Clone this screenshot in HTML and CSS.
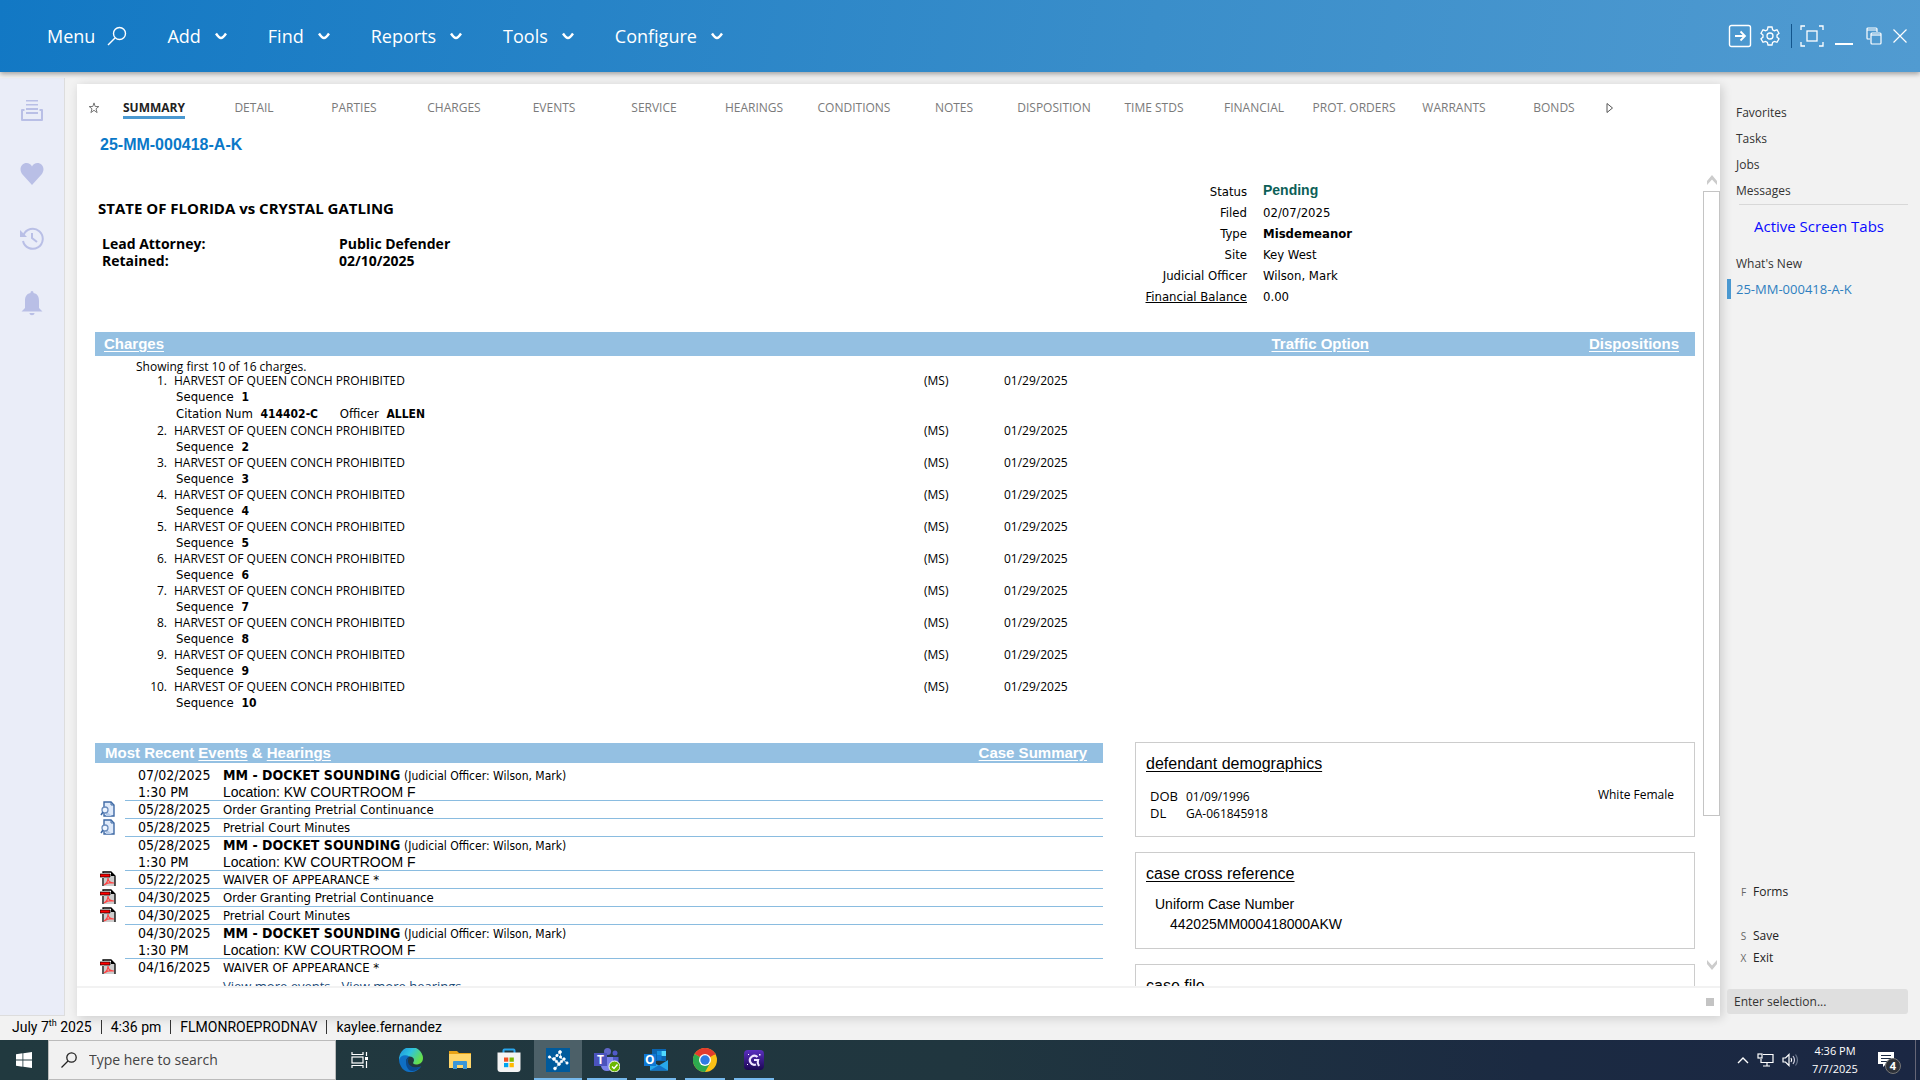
FILE: index.html
```
<!DOCTYPE html>
<html lang="en">
<head>
<meta charset="utf-8">
<title>25-MM-000418-A-K</title>
<link rel="stylesheet" href="styles.css">
</head>
<body>
<svg class="defs" aria-hidden="true">
  <symbol id="chev" viewBox="0 0 14 8"><path d="M2 1.500Q5 6 7 6T12 1.500" fill="none" stroke="#fff" stroke-width="2.400"/></symbol>
  <symbol id="pdf" viewBox="0 0 16 16"><path d="M4 3h8l3 3v9H4z" fill="#ccc"/><path d="M3 2V1h8l4 4v10M3 7v8" fill="none" stroke="#000" stroke-width="1.300"/><path d="M11 1v4h4z" fill="#000"/><path d="M0 3h10v3H0z" fill="#f00" stroke="#000" stroke-width=".7"/><path d="M4 14c3-2 4-4 4-7 0 3 2 5 6 5-4-1-7 0-10 2z" fill="none" stroke="#f44" stroke-width="1.200"/></symbol>
  <symbol id="doc" viewBox="0 0 16 16"><path d="M4 1h7l3 3v11H4z" fill="#dfeafa" stroke="#3f6aa5" stroke-width="1.400"/><path d="M11 1v3h3" fill="none" stroke="#3f6aa5"/><path d="M6 10 12 15H6z" fill="#b8cdea"/><circle cx="5" cy="9" r="3" fill="#eef5ff" stroke="#6b8dbd" stroke-width="1.300"/><path d="M3 11 1 14" stroke="#3f6aa5" stroke-width="1.600"/></symbol>
  <symbol id="arrow" viewBox="0 0 12 12"><path d="M1 11V7L6 1l5 6v4L6 5.500z" fill="#ccc"/></symbol>
</svg>

<header class="topbar">
  <nav class="menu" aria-label="Main">
    <button class="menu-item search">Menu <svg width="20" height="20" viewBox="0 0 20 20" fill="none" stroke="#fff" stroke-width="1.400"><circle cx="12.500" cy="7.500" r="6"/><path d="M8 12 1 19"/></svg></button>
    <button class="menu-item">Add <svg width="14" height="8"><use href="#chev"/></svg></button>
    <button class="menu-item">Find <svg width="14" height="8"><use href="#chev"/></svg></button>
    <button class="menu-item">Reports <svg width="14" height="8"><use href="#chev"/></svg></button>
    <button class="menu-item">Tools <svg width="14" height="8"><use href="#chev"/></svg></button>
    <button class="menu-item">Configure <svg width="14" height="8"><use href="#chev"/></svg></button>
  </nav>
  <div class="window-tools">
    <button aria-label="Sign out"><svg width="24" height="24" viewBox="0 0 24 24" fill="none" stroke="#fff" stroke-width="1.400"><rect x="1.500" y="1.500" width="21" height="21" rx="2"/><path d="M7 12h10M12.500 7.500 17 12l-4.500 4.500" stroke-width="1.800"/></svg></button>
    <button aria-label="Settings"><svg width="20" height="20" viewBox="0 0 20 20" fill="none" stroke="#fff" stroke-width="1.300"><path d="M8 1h4l.6 2.700 1.800 1 2.600-.9 2 3.500-2 1.800v2l2 1.700-2 3.500-2.600-.9-1.800 1L12 19H8l-.6-2.600-1.800-1-2.600.9-2-3.500 2-1.700v-2L1 7.300l2-3.500 2.600.9 1.800-1z"/><circle cx="10" cy="10" r="3"/></svg></button>
    <span class="divider"></span>
    <button aria-label="Full screen"><svg width="24" height="22" viewBox="0 0 24 22" fill="none" stroke="#fff" stroke-width="1.300"><path d="M5 1H1v4M19 1h4v4M5 21H1v-4M19 21h4v-4"/><rect x="7" y="6" width="10" height="10"/></svg></button>
    <button class="minimize" aria-label="Minimize"></button>
    <button class="restore" aria-label="Restore"><svg width="16" height="18" viewBox="0 0 16 18" fill="none" stroke="#fff" stroke-width="1.200"><path d="M4 12H1.500Q1 12 1 11V2q0-1 1-1h8q1 0 1 1v3M1 3h10"/><rect x="5" y="6" width="10" height="11" rx="1"/><path d="M5 8h10"/></svg></button>
    <button aria-label="Close"><svg width="14" height="14" viewBox="0 0 14 14" stroke="#fff" stroke-width="1.200"><path d="m.5.5 13 13M13.500.5l-13 13"/></svg></button>
  </div>
</header>

<div class="workspace">
  <aside class="rail" aria-label="Shortcuts">
    <button aria-label="Documents"><svg width="24" height="24" viewBox="0 0 24 24"><path d="M6 2h12v1.500H6zM6 6h12v1.500H6zM6 10h12v2H6zM6 14h12v2H6z" fill="#b9bfe6"/><path d="M4.500 12H2v10h20V12h-2.500" fill="none" stroke="#b9bfe6" stroke-width="2" stroke-linejoin="round"/></svg></button>
    <button aria-label="Favorites"><svg width="24" height="24" viewBox="0 0 24 24" fill="#b9bfe6"><path d="M12 23 2.500 12.500C-2 6.500 2 1 6.500 1 9 1 11 2.500 12 4.500 13 2.500 15 1 17.500 1 22 1 26 6.500 21.500 12.500z"/></svg></button>
    <button aria-label="History"><svg width="24" height="24" viewBox="0 0 24 24" fill="none" stroke="#b9bfe6" stroke-width="2"><path d="M3.500 9A10 10 0 1 1 3 15"/><path d="M0 4v7h7z" fill="#b9bfe6" stroke="none"/><path d="M12 7v5l5 4"/></svg></button>
    <button aria-label="Notifications"><svg width="24" height="26" viewBox="0 0 24 26" fill="#b9bfe6"><path d="M12 1c1 0 1.500.7 1.500 2C18 4 19 7 19 11v7l3.500 3.500h-21L5 18v-7c0-4 1-7 5.500-8 0-1.300.5-2 1.500-2zM9.500 23h5c0 3-5 3-5 0z"/></svg></button>
  </aside>

  <main class="panel">
    <nav class="tabs" aria-label="Case sections">
      <button class="star" aria-label="Add to favorites"><svg width="12" height="12" viewBox="0 0 12 12" fill="none" stroke="#777"><path d="M6 .9 7.200 4.500h3.700L8 6.800l1.100 3.800L6 8.300l-3.100 2.300L4 6.800 1.100 4.500h3.700z"/></svg></button>
      <a class="tab current" href="#"><span>SUMMARY</span></a>
      <a class="tab" href="#">DETAIL</a>
      <a class="tab" href="#">PARTIES</a>
      <a class="tab" href="#">CHARGES</a>
      <a class="tab" href="#">EVENTS</a>
      <a class="tab" href="#">SERVICE</a>
      <a class="tab" href="#">HEARINGS</a>
      <a class="tab" href="#">CONDITIONS</a>
      <a class="tab" href="#">NOTES</a>
      <a class="tab" href="#">DISPOSITION</a>
      <a class="tab" href="#">TIME STDS</a>
      <a class="tab" href="#">FINANCIAL</a>
      <a class="tab" href="#">PROT. ORDERS</a>
      <a class="tab" href="#">WARRANTS</a>
      <a class="tab" href="#">BONDS</a>
      <button class="more" aria-label="More tabs"><svg width="8" height="12" viewBox="0 0 8 12" fill="none" stroke="#555"><path d="M1 1.500v9L6.500 6z"/></svg></button>
    </nav>
    <h1 class="case-number">25-MM-000418-A-K</h1>

    <div class="viewport">
      <div class="content">
        <section class="caption">
          <div class="style">
            <h2>STATE OF FLORIDA vs CRYSTAL GATLING</h2>
            <dl class="attorney">
              <dt>Lead Attorney:</dt><dd>Public Defender</dd>
              <dt>Retained:</dt><dd>02/10/2025</dd>
            </dl>
          </div>
          <dl class="facts">
            <dt>Status</dt><dd class="pending">Pending</dd>
            <dt>Filed</dt><dd>02/07/2025</dd>
            <dt>Type</dt><dd><b>Misdemeanor</b></dd>
            <dt>Site</dt><dd>Key West</dd>
            <dt>Judicial Officer</dt><dd>Wilson, Mark</dd>
            <dt><a href="#">Financial Balance</a></dt><dd>0.00</dd>
          </dl>
        </section>

        <section class="charges">
          <div class="bar charges-bar"><a href="#">Charges</a><a class="traffic" href="#">Traffic Option</a><a href="#">Dispositions</a></div>
          <p class="showing">Showing first 10 of 16 charges.</p>
          <table class="charge-table">
            <colgroup><col class="c-num"><col class="c-name"><col class="c-level"><col></colgroup>
            <tbody>
            <tr><td>1.</td><td>HARVEST OF QUEEN CONCH PROHIBITED</td><td>(MS)</td><td>01/29/2025</td></tr>
            <tr class="seq"><td></td><td colspan="3">Sequence <b>1</b></td></tr>
            <tr class="seq citation"><td></td><td colspan="3">Citation Num <b>414402-C</b> <span class="officer">Officer <b>ALLEN</b></span></td></tr>
            <tr><td>2.</td><td>HARVEST OF QUEEN CONCH PROHIBITED</td><td>(MS)</td><td>01/29/2025</td></tr>
            <tr class="seq"><td></td><td colspan="3">Sequence <b>2</b></td></tr>
            <tr><td>3.</td><td>HARVEST OF QUEEN CONCH PROHIBITED</td><td>(MS)</td><td>01/29/2025</td></tr>
            <tr class="seq"><td></td><td colspan="3">Sequence <b>3</b></td></tr>
            <tr><td>4.</td><td>HARVEST OF QUEEN CONCH PROHIBITED</td><td>(MS)</td><td>01/29/2025</td></tr>
            <tr class="seq"><td></td><td colspan="3">Sequence <b>4</b></td></tr>
            <tr><td>5.</td><td>HARVEST OF QUEEN CONCH PROHIBITED</td><td>(MS)</td><td>01/29/2025</td></tr>
            <tr class="seq"><td></td><td colspan="3">Sequence <b>5</b></td></tr>
            <tr><td>6.</td><td>HARVEST OF QUEEN CONCH PROHIBITED</td><td>(MS)</td><td>01/29/2025</td></tr>
            <tr class="seq"><td></td><td colspan="3">Sequence <b>6</b></td></tr>
            <tr><td>7.</td><td>HARVEST OF QUEEN CONCH PROHIBITED</td><td>(MS)</td><td>01/29/2025</td></tr>
            <tr class="seq"><td></td><td colspan="3">Sequence <b>7</b></td></tr>
            <tr><td>8.</td><td>HARVEST OF QUEEN CONCH PROHIBITED</td><td>(MS)</td><td>01/29/2025</td></tr>
            <tr class="seq"><td></td><td colspan="3">Sequence <b>8</b></td></tr>
            <tr><td>9.</td><td>HARVEST OF QUEEN CONCH PROHIBITED</td><td>(MS)</td><td>01/29/2025</td></tr>
            <tr class="seq"><td></td><td colspan="3">Sequence <b>9</b></td></tr>
            <tr><td>10.</td><td>HARVEST OF QUEEN CONCH PROHIBITED</td><td>(MS)</td><td>01/29/2025</td></tr>
            <tr class="seq"><td></td><td colspan="3">Sequence <b>10</b></td></tr>
            </tbody>
          </table>
        </section>

        <div class="columns">
          <section class="events">
            <div class="bar events-bar"><span>Most Recent <a href="#">Events</a> &amp; <a href="#">Hearings</a></span><a href="#">Case Summary</a></div>
            <table class="event-table">
              <colgroup><col class="e-icon"><col class="e-date"><col></colgroup>
              <tbody>
              <tr class="hearing"><td></td><td>07/02/2025<br>1:30 PM</td><td><b>MM - DOCKET SOUNDING</b> <small>(Judicial Officer: Wilson, Mark)</small><br><span class="place">Location: KW COURTROOM F</span></td></tr>
              <tr><td><svg width="16" height="16"><use href="#doc"/></svg></td><td>05/28/2025</td><td>Order Granting Pretrial Continuance</td></tr>
              <tr><td><svg width="16" height="16"><use href="#doc"/></svg></td><td>05/28/2025</td><td>Pretrial Court Minutes</td></tr>
              <tr class="hearing"><td></td><td>05/28/2025<br>1:30 PM</td><td><b>MM - DOCKET SOUNDING</b> <small>(Judicial Officer: Wilson, Mark)</small><br><span class="place">Location: KW COURTROOM F</span></td></tr>
              <tr><td><svg width="16" height="16"><use href="#pdf"/></svg></td><td>05/22/2025</td><td>WAIVER OF APPEARANCE *</td></tr>
              <tr><td><svg width="16" height="16"><use href="#pdf"/></svg></td><td>04/30/2025</td><td>Order Granting Pretrial Continuance</td></tr>
              <tr><td><svg width="16" height="16"><use href="#pdf"/></svg></td><td>04/30/2025</td><td>Pretrial Court Minutes</td></tr>
              <tr class="hearing"><td></td><td>04/30/2025<br>1:30 PM</td><td><b>MM - DOCKET SOUNDING</b> <small>(Judicial Officer: Wilson, Mark)</small><br><span class="place">Location: KW COURTROOM F</span></td></tr>
              <tr><td><svg width="16" height="16"><use href="#pdf"/></svg></td><td>04/16/2025</td><td>WAIVER OF APPEARANCE *</td></tr>
              </tbody>
            </table>
            <p class="view-more"><a href="#">View more events</a><a href="#">View more hearings</a></p>
          </section>

          <div class="cards">
            <section class="card">
              <h3><a href="#">defendant demographics</a></h3>
              <div class="demographics">
                <dl><dt>DOB</dt><dd>01/09/1996</dd><dt>DL</dt><dd>GA-061845918</dd></dl>
                <span>White Female</span>
              </div>
            </section>
            <section class="card reference">
              <h3><a href="#">case cross reference</a></h3>
              <dl><dt>Uniform Case Number</dt><dd>442025MM000418000AKW</dd></dl>
            </section>
            <section class="card">
              <h3><a href="#">case file</a></h3>
            </section>
          </div>
        </div>
      </div>
      <div class="scrollbar" aria-hidden="true">
        <svg width="12" height="12"><use href="#arrow"/></svg>
        <div class="track"><div class="thumb"></div></div>
        <svg class="down" width="12" height="12"><use href="#arrow"/></svg>
      </div>
    </div>
    <footer class="panel-foot"><span class="grip"></span></footer>
  </main>

  <aside class="side">
    <nav class="links" aria-label="Views">
      <a href="#">Favorites</a>
      <a href="#">Tasks</a>
      <a href="#">Jobs</a>
      <a href="#">Messages</a>
    </nav>
    <h2>Active Screen Tabs</h2>
    <nav class="links" aria-label="Open screens">
      <a href="#">What's New</a>
      <a class="open" href="#">25-MM-000418-A-K</a>
    </nav>
    <div class="commands">
      <button class="forms"><kbd>F</kbd>Forms</button>
      <button><kbd>S</kbd>Save</button>
      <button><kbd>X</kbd>Exit</button>
    </div>
    <input class="selection" type="text" placeholder="Enter selection..." aria-label="Enter selection">
  </aside>
</div>

<div class="status"><span>July 7<sup>th</sup> 2025</span><i></i><span>4:36 pm</span><i></i><span>FLMONROEPRODNAV</span><i></i><span>kaylee.fernandez</span></div>

<footer class="taskbar">
  <button class="start" aria-label="Start"><svg width="16" height="16" viewBox="0 0 16 16" fill="#fff"><path d="M0 2.200 6.500 1.300v6.300H0zM7.300 1.200 16 0v7.600H7.300zM0 8.400h6.500v6.300L0 13.800zM7.300 8.400H16V16l-8.700-1.200z"/></svg></button>
  <label class="find"><svg width="16" height="16" viewBox="0 0 16 16" fill="none" stroke="#222" stroke-width="1.300"><circle cx="10.500" cy="5.500" r="4.700"/><path d="M7 9 .5 15.500"/></svg><input type="text" placeholder="Type here to search" aria-label="Type here to search"></label>
  <div class="apps">
    <button class="app task-view" aria-label="Task view"><svg width="18" height="16" viewBox="0 0 18 16" fill="none" stroke="#fff" stroke-width="1.200"><path d="M1 0v2.500h11V0M1 16v-2.500h11V16M15.500 0v4M15.500 9v7"/><rect x="1" y="5" width="11" height="6"/><path d="M14 5h3v3h-3z" fill="#fff" stroke="none"/></svg></button>
    <button class="app" aria-label="Edge"><svg width="24" height="24" viewBox="0 0 24 24"><defs><linearGradient id="eg" x1="0" y1="0" x2="1" y2=".5"><stop offset="0" stop-color="#1b8fdc"/><stop offset=".5" stop-color="#2fc3e0"/><stop offset="1" stop-color="#66e04a"/></linearGradient></defs><path d="M0 12A12 12 0 0 1 24 10c0 5-4 6.500-7 6.500-2.500 0-3.500-1-2.500-2.500C16 11 14 8.500 10.500 8.500 5 8.500 3 12 0 12z" fill="url(#eg)"/><path d="M0 12C1 7.500 6 6 10.500 8.500 7 10 6.500 13 8 16c2 4 7 5 14 2.500C17 26 6 26 2 18.500Q0 15.500 0 12z" fill="#0f6fc4"/><path d="M10.500 8.500C6 11 6 18 10 22c3 2 8 1 12-3.500C15 21 9 18 9 13q0-3 1.500-4.500z" fill="#0b4a8f"/></svg></button>
    <button class="app" aria-label="File Explorer"><svg width="22" height="20" viewBox="0 0 22 20"><path d="M0 1h8l2 2h12v15H0z" fill="#e8a317"/><path d="M0 4h22v14H0z" fill="#ffd66b"/><path d="M4 19v-7q0-1 1-1h12q1 0 1 1v7h-4v-4H8v4z" fill="#3a96d8"/></svg></button>
    <button class="app" aria-label="Store"><svg width="24" height="24" viewBox="0 0 24 24"><path d="M6.500 6V2.500q0-1 1-1h9q1 0 1 1V6" fill="none" stroke="#29a6ee" stroke-width="2"/><path d="M.5 4.500h23V21q0 3-3 3h-17q-3 0-3-3z" fill="#f4f4f4"/><path d="M7 9.500h4.300v4.200H7z" fill="#f25022"/><path d="M12.500 9.500h4.300v4.200h-4.300z" fill="#7fba00"/><path d="M7 15h4.300v4.200H7z" fill="#00a4ef"/><path d="M12.500 15h4.300v4.200h-4.300z" fill="#ffb900"/></svg></button>
    <button class="app running active" aria-label="Case manager"><svg width="24" height="24" viewBox="0 0 24 24"><path d="M0 0h24v24H0z" fill="#005a9c"/><g fill="#fff" stroke="#fff" stroke-width=".7"><path d="M14 4 8 11l5 5-4 5M3 9l5 2M14 4l1 6 6 5M13 16l5-5" fill="none"/><circle cx="14" cy="4" r="1.500"/><circle cx="11" cy="7.500" r="1.200"/><circle cx="8" cy="11" r="1.500"/><circle cx="3.500" cy="9" r="1.200"/><circle cx="10.500" cy="13.500" r="1.200"/><circle cx="13" cy="16" r="1.500"/><circle cx="9" cy="20.500" r="1.400"/><circle cx="15.500" cy="13.500" r="1.200"/><circle cx="18" cy="11" r="1.300"/><circle cx="14.500" cy="9" r="1.200"/><circle cx="21" cy="15" r="1.200"/></g></svg></button>
    <button class="app running" aria-label="Teams"><svg width="26" height="24" viewBox="0 0 26 24"><circle cx="13.500" cy="3.500" r="3.500" fill="#6066c8"/><circle cx="21" cy="5" r="2.500" fill="#5059c9"/><path d="M17 9h7.500v6q-1 5-7.500 4z" fill="#5059c9"/><path d="M8 9h11v9q-1 5-6 5t-6-5z" fill="#7b83eb"/><path d="M0 5h13v13H0z" fill="#4b53bc"/><text x="3" y="16" fill="#fff" class="glyph">T</text><circle cx="20.500" cy="18.500" r="5.500" fill="#6bb700" stroke="#fff"/><path d="m18 18.500 2 2 3.500-4" fill="none" stroke="#fff" stroke-width="1.400"/></svg></button>
    <button class="app running" aria-label="Outlook"><svg width="24" height="22" viewBox="0 0 24 22"><path d="M8 0h14v12H8z" fill="#0a64b0"/><path d="M13 2h4.500v4.500H13z" fill="#1490df"/><path d="M17.500 2H22v5h-4.500z" fill="#50d9ff"/><path d="M13 6.500h4.500V11H13z" fill="#0f78d4"/><path d="M6 21.500V12l9 4.500 9-5.500v10.500z" fill="#28a8ea"/><path d="m6 21.500 9-5.500 9 5.500z" fill="#1373c8"/><path d="M0 5h12v12H0z" fill="#0f78d4"/><text x="1" y="15" fill="#fff" class="glyph">O</text></svg></button>
    <button class="app running" aria-label="Chrome"><svg width="24" height="24" viewBox="0 0 24 24"><circle cx="12" cy="12" r="12" fill="#fbc116"/><path d="M12 12 1.600 6A12 12 0 0 1 22.400 6z" fill="#e33b2e"/><path d="M12 12 1.600 6A12 12 0 0 0 12 24l5.200-9z" fill="#2da94f"/><path d="M12 6h10.400" stroke="#e33b2e"/><circle cx="12" cy="12" r="6" fill="#fff"/><circle cx="12" cy="12" r="4.700" fill="#2f7ae5"/></svg></button>
    <button class="app running" aria-label="G app"><svg width="20" height="20" viewBox="0 0 20 20"><defs><linearGradient id="gg" x2="0" y2="1"><stop stop-color="#5b2fc0"/><stop offset="1" stop-color="#1b0652"/></linearGradient></defs><rect width="20" height="20" rx="4" fill="url(#gg)"/><path d="M13.500 7A4.500 4.500 0 1 0 12 14.500M10 10h4q-1 3 1 6" fill="none" stroke="#f0e6ff" stroke-width="2.200"/><path d="M4 4h1v1H4zM15 4h1.500v1.500H15zM3 14h1v1H3z" fill="#fff"/></svg></button>
  </div>
  <div class="tray">
    <svg width="12" height="8" viewBox="0 0 12 8" fill="none" stroke="#fff" stroke-width="1.400"><path d="M1 7 6 2l5 5"/></svg>
    <svg width="17" height="14" viewBox="0 0 17 14" fill="none" stroke="#fff" stroke-width="1.200"><path d="M6 1.500h10v8H4V6M10 9.500v3.500M6 13h7"/><rect x="1" y="1" width="4" height="4"/></svg>
    <svg width="17" height="14" viewBox="0 0 17 14" fill="none" stroke="#fff" stroke-width="1.200"><path d="M1 5h2.500L7 1.500v11L3.500 9H1zM9 5q1.300 2 0 4"/><path d="M11 3q3 4 0 8" stroke="#ccd"/><path d="M13.500 1.500q4 5.500 0 11" stroke="#68758a"/></svg>
    <time>4:36 PM<br>7/7/2025</time>
    <button class="notices" aria-label="4 notifications"><svg width="18" height="18" viewBox="0 0 18 18"><path d="M1 1h16v12h-8l-3 3v-3H1z" fill="#fff"/><path d="M4 4.500h10M4 7.500h10M4 10.500h6" stroke="#1c2b45"/></svg><span>4</span></button>
    <span class="peek"></span>
  </div>
</footer>
</body>
</html>
```
FILE: styles.css
```
* { box-sizing: border-box; }

body {
  margin: 0;
  height: 100vh;
  display: flex;
  flex-direction: column;
  background: #f2f2f2;
  color: #000;
  font: 13px/16px "Open Sans", "Noto Sans", sans-serif;
}

h1, h2, h3, p, dl, dd { margin: 0; }
a { color: inherit; }
button { border: 0; padding: 0; background: none; color: inherit; font: inherit; }
svg { display: block; flex: none; }
table { border-collapse: separate; border-spacing: 0; table-layout: fixed; width: 100%; }
td { padding: 0; }
.defs { position: absolute; width: 0; height: 0; }

/* Top bar */
.topbar {
  flex: none;
  height: 72px;
  padding: 0 13px 0 47px;
  display: flex;
  align-items: center;
  justify-content: space-between;
  background: linear-gradient(100deg, #1278c4, #3a8eca 60%, #519bd1);
  box-shadow: 0 2px 5px rgba(0, 0, 0, .35);
  color: #fff;
  z-index: 1;
}
.menu { display: flex; gap: 40px; }
.menu-item { display: flex; align-items: center; gap: 13px; font-size: 18px; line-height: 24px; }
.search { gap: 12px; }
.window-tools { display: flex; align-items: center; gap: 8px; }
.divider { width: 1px; height: 24px; margin-left: 3px; background: #12558c; }
.minimize { width: 18px; height: 18px; margin: 0 3px; border-bottom: 2px solid #fff; }
.restore { margin: 0 3px 0 2px; }

/* Work area */
.workspace { flex: 1; min-height: 0; display: flex; padding-top: 6px; }
.rail {
  width: 65px;
  flex: none;
  padding-top: 20px;
  display: flex;
  flex-direction: column;
  align-items: center;
  gap: 40px;
  background: #eaedf8;
  border-right: 1px solid #ddd;
  border-bottom: 1px solid #ddd;
}
.panel {
  flex: 1;
  min-width: 0;
  margin: 6px 0 0 12px;
  display: flex;
  flex-direction: column;
  background: #fff;
  box-shadow: 2px 2px 10px rgba(0, 0, 0, .16);
}

.tabs { display: flex; align-items: center; height: 45px; padding: 2px 0 0 8px; font-size: 12px; color: #7a7a7a; }
.tab { flex: 0 1 100px; text-align: center; text-decoration: none; white-space: nowrap; }
.star { width: 19px; padding-right: 2px; }
.star svg { margin: 0 auto; }
.current { color: #222; font-weight: 700; }
.current span { display: inline-block; border-bottom: 3px solid #4a98d0; line-height: 16px; margin-top: 3px; }
.more { margin-left: 2px; }
.case-number { padding-left: 23px; color: #0a78c8; font: 700 16px/32px "Liberation Sans", sans-serif; }

.viewport { flex: 1; min-height: 0; display: flex; margin-top: 11px; }
.content { flex: 1; min-width: 0; overflow: hidden; padding: 9px 8px 0 18px; }
.scrollbar { width: 17px; flex: none; display: flex; flex-direction: column; align-items: center; padding: 2px 0 15px; }
.track { flex: 1; width: 17px; margin: 5px 0 6px; }
.thumb { height: 82%; border: 1px solid #c4c4c4; background: #fff; }
.down { transform: rotate(180deg); }
.panel-foot { flex: none; height: 30px; display: flex; align-items: center; justify-content: flex-end; border-top: 2px solid #f2f2f2; padding-right: 6px; }
.grip { width: 8px; height: 8px; background: #c4c4c4; }

/* Case caption */
.caption { display: grid; grid-template-columns: 62% 1fr; height: 151px; }
.caption h2 { padding: 18px 0 0 3px; font-size: 15px; line-height: 18px; }
.attorney { display: grid; grid-template-columns: 237px 1fr; padding: 18px 0 0 7px; font-weight: 700; font-size: 14px; line-height: 17px; }
.facts { display: grid; grid-template-columns: 160px 1fr; grid-auto-rows: 21px; column-gap: 16px; align-content: start; font-family: "DejaVu Sans Condensed", sans-serif; line-height: 21px; }
.facts dt { text-align: right; }
.facts .pending { color: #0c5f57; font: 700 14px/19px "Liberation Sans", sans-serif; }

/* Section bars */
.bar { display: flex; justify-content: space-between; background: #94c0e2; color: #fff; font: 700 15px/24px "Liberation Sans", sans-serif; }
.bar a { text-underline-offset: 2px; }
.charges-bar { padding: 0 16px 0 9px; }
.traffic { margin-left: auto; margin-right: 220px; }
.events-bar { padding: 0 16px 0 10px; line-height: 20px; }

/* Charges */
.charges { height: 411px; }
.showing { padding: 4px 0 0 41px; font-size: 12px; line-height: 13px; }
.charge-table { font-size: 12px; }
.charge-table td { height: 16px; line-height: 16px; }
.charge-table tr td:first-child { text-align: right; padding-right: 7px; }
.charge-table .citation td { height: 17px; line-height: 17px; }
.c-num { width: 79px; }
.c-name { width: 750px; }
.c-level { width: 80px; }
.seq { font-family: "DejaVu Sans Condensed", sans-serif; font-size: 13px; }
.seq td:last-child { padding-left: 2px; }
.seq b { margin-left: 4px; font-size: 12px; }
.officer { margin-left: 18px; }

/* Events and cards */
.columns { display: grid; grid-template-columns: 9fr 5fr; gap: 32px; }
.event-table { margin-top: 4px; font-family: "DejaVu Sans Condensed", sans-serif; font-size: 13px; }
.event-table td { height: 18px; line-height: 17px; vertical-align: top; }
.event-table td:nth-child(n+2) { box-shadow: inset 0 -1px #8abce0; }
.event-table tr:last-child td:nth-child(n+2) { box-shadow: none; }
.event-table td:first-child { padding-left: 5px; }
.event-table td:nth-child(2) { padding-left: 13px; font-size: 14px; }
.event-table .hearing td { height: 34px; }
.event-table b { font-size: 14px; line-height: 16px; }
.event-table small { font-size: 12px; line-height: 16px; }
.place { font: 14px/16px "Liberation Sans", sans-serif; }
.e-icon { width: 30px; }
.e-date { width: 98px; }
.view-more { display: flex; gap: 11px; padding-left: 128px; color: #1a4a78; line-height: 18px; }

.cards { display: flex; flex-direction: column; gap: 15px; margin-top: -1px; }
.card { min-height: 95px; padding: 9px 10px; border: 1px solid #ccc; }
.card h3 { font: 16px/24px "Liberation Sans", sans-serif; }
.card h3 a { text-underline-offset: 2px; }
.demographics { display: flex; justify-content: space-between; padding: 11px 10px 0 4px; font-size: 12px; }
.demographics dl { display: grid; grid-template-columns: 36px 1fr; line-height: 17px; padding-top: 1px; }
.demographics dt { font-size: 13px; }
.reference { min-height: 97px; }
.reference dl { padding: 8px 0 0 9px; font: 14px/20px "Liberation Sans", sans-serif; }
.reference dd { padding-left: 15px; }

/* Right side */
.side { width: 200px; flex: none; padding: 22px 12px 2px 7px; display: flex; flex-direction: column; font-size: 12px; color: #333; }
.links { display: flex; flex-direction: column; line-height: 26px; }
.links a { padding-left: 9px; text-decoration: none; }
.side h2 { margin: 0 0 16px 12px; padding: 12px 0 0 15px; border-top: 1px solid #d8d8d8; color: #0a0aff; font-size: 15px; line-height: 18px; font-weight: 400; }
.links .open { padding-left: 5px; margin: 2px 0; border-left: 4px solid #4a98d0; color: #2f7fc0; font-size: 13px; line-height: 20px; }
.commands { margin-top: auto; padding: 0 0 20px 7px; display: flex; flex-direction: column; align-items: flex-start; line-height: 22px; color: #222; }
.commands button { display: flex; }
.commands .forms { margin-bottom: 22px; }
.commands kbd { width: 19px; font-family: inherit; font-size: 10px; color: #666; }
.selection { width: 100%; height: 25px; padding: 0 7px; border: 0; border-radius: 3px; background: #dfdfdf; font: inherit; }
.selection::placeholder { color: #333; }

/* Status line */
.status { flex: none; height: 24px; padding: 0 0 2px 12px; display: flex; align-items: center; gap: 9px; font-family: Roboto, sans-serif; font-size: 14px; }
.status i { width: 1px; height: 14px; background: #333; }
.status sup { font-size: 9px; line-height: 8px; }

/* Taskbar */
.taskbar { flex: none; height: 40px; display: flex; background: linear-gradient(90deg, #21393f, #20363f 50%, #1b2a42 80%, #1b2743); color: #fff; }
.start { width: 48px; display: grid; place-items: center; }
.find { width: 288px; display: flex; align-items: center; gap: 12px; padding-left: 12px; background: #f1f1f1; border: 1px solid #bbb; }
.find input { flex: 1; min-width: 0; border: 0; padding: 0; background: none; font: 14px/20px "Open Sans", sans-serif; }
.find input::placeholder { color: #444; }
.apps { display: flex; gap: 1px; }
.app { width: 48px; display: grid; place-items: center; }
.task-view { margin-right: 2px; }
.running { background: linear-gradient(#76b9ed, #76b9ed) bottom / 40px 2px no-repeat; }
.active { background: linear-gradient(#76b9ed, #76b9ed) bottom / 100% 2px no-repeat #4c6068; }
.glyph { font: 700 12px "Open Sans", sans-serif; }
.tray { margin-left: auto; display: flex; align-items: center; gap: 8px; }
.tray time { width: 56px; text-align: center; font-size: 11px; line-height: 18px; }
.notices { position: relative; margin: 0 12px 0 6px; }
.notices span { position: absolute; left: 8px; top: 7px; width: 16px; height: 16px; border: 1px solid #777; border-radius: 50%; background: #2c3038; font-size: 11px; line-height: 14px; font-weight: 700; }
.peek { width: 1px; height: 40px; margin-right: 4px; background: #667; }
```
